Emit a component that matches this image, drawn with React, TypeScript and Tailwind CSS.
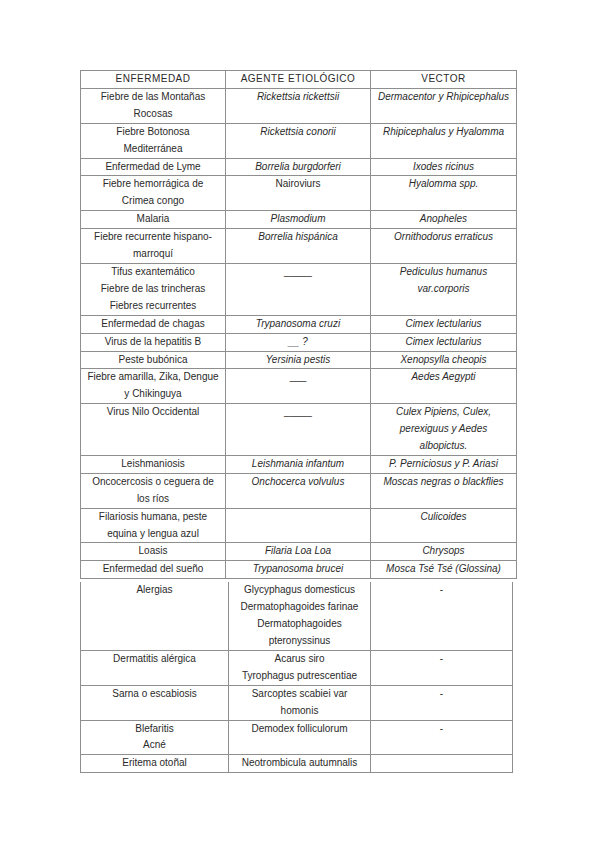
import React from "react";

type Cell = { lines: string[]; italic?: boolean };
type Row = [Cell, Cell, Cell];

const c = (s: string, italic = false): Cell => ({ lines: s === "" ? [] : s.split("|"), italic });

const upper: Row[] = [
  [c("Fiebre de las Montañas|Rocosas"), c("Rickettsia rickettsii", true), c("Dermacentor y Rhipicephalus", true)],
  [c("Fiebre Botonosa|Mediterránea"), c("Rickettsia conorii", true), c("Rhipicephalus y Hyalomma", true)],
  [c("Enfermedad de Lyme"), c("Borrelia burgdorferi", true), c("Ixodes ricinus", true)],
  [c("Fiebre hemorrágica de|Crimea congo"), c("Nairoviurs"), c("Hyalomma spp.", true)],
  [c("Malaria"), c("Plasmodium", true), c("Anopheles", true)],
  [c("Fiebre recurrente hispano-|marroquí"), c("Borrelia hispánica", true), c("Ornithodorus erraticus", true)],
  [c("Tifus exantemático|Fiebre de las trincheras|Fiebres recurrentes"), c("_____"), c("Pediculus humanus|var.corporis", true)],
  [c("Enfermedad de chagas"), c("Trypanosoma cruzi", true), c("Cimex lectularius", true)],
  [c("Virus de la hepatitis B"), c("__ ?", true), c("Cimex lectularius", true)],
  [c("Peste bubónica"), c("Yersinia pestis", true), c("Xenopsylla cheopis", true)],
  [c("Fiebre amarilla, Zika, Dengue|y Chikinguya"), c("___"), c("Aedes Aegypti", true)],
  [c("Virus Nilo Occidental"), c("_____"), c("Culex Pipiens, Culex,|perexiguus y Aedes|albopictus.", true)],
  [c("Leishmaniosis"), c("Leishmania infantum", true), c("P. Perniciosus y P. Ariasi", true)],
  [c("Oncocercosis o ceguera de|los ríos"), c("Onchocerca volvulus", true), c("Moscas negras o blackflies", true)],
  [c("Filariosis humana, peste|equina y lengua azul"), c(""), c("Culicoides", true)],
  [c("Loasis"), c("Filaria Loa Loa", true), c("Chrysops", true)],
  [c("Enfermedad del sueño"), c("Trypanosoma brucei", true), c("Mosca Tsé Tsé (Glossina)", true)],
];

const lower: Row[] = [
  [c("Alergias"), c("Glycyphagus domesticus|Dermatophagoides farinae|Dermatophagoides|pteronyssinus"), c("-")],
  [c("Dermatitis alérgica"), c("Acarus siro|Tyrophagus putrescentiae"), c("-")],
  [c("Sarna o escabiosis"), c("Sarcoptes scabiei var|homonis"), c("-")],
  [c("Blefaritis|Acné"), c("Demodex folliculorum"), c("-")],
  [c("Eritema otoñal"), c("Neotrombicula autumnalis"), c("")],
];

const td =
  "border border-[#8e8e8e] align-top text-center px-1 py-0 leading-[16.9px] whitespace-nowrap overflow-hidden";

function CellView({ cell }: { cell: Cell }) {
  return (
    <td className={td + (cell.italic ? " italic" : "")}>
      {cell.lines.map((l, i) => (
        <div key={i}>{l}</div>
      ))}
      {cell.lines.length === 0 ? <div>&nbsp;</div> : null}
    </td>
  );
}

export default function App() {
  return (
    <div
      className="w-[599px] h-[848px] bg-white pt-[70px] pl-[80px] text-[10px] text-[#2a2a2a]"
      style={{ fontFamily: '"Liberation Sans", Arial, sans-serif' }}
    >
      <table className="border-collapse table-fixed w-[436px]">
        <colgroup>
          <col className="w-[145px]" />
          <col className="w-[145px]" />
          <col className="w-[146px]" />
        </colgroup>
        <tbody>
          <tr>
            <td className={td + " tracking-[0.5px]"}>ENFERMEDAD</td>
            <td className={td + " tracking-[0.5px]"}>AGENTE ETIOLÓGICO</td>
            <td className={td + " tracking-[0.5px]"}>VECTOR</td>
          </tr>
          {upper.map((r, i) => (
            <tr key={i}>
              {r.map((cell, j) => (
                <CellView key={j} cell={cell} />
              ))}
            </tr>
          ))}
        </tbody>
      </table>
      <table className="border-collapse table-fixed w-[432px] mt-[3px]">
        <colgroup>
          <col className="w-[148px]" />
          <col className="w-[142px]" />
          <col className="w-[142px]" />
        </colgroup>
        <tbody>
          {lower.map((r, i) => (
            <tr key={i} className={i === 0 ? "[&>td]:border-t-0" : ""}>
              {r.map((cell, j) => (
                <CellView key={j} cell={cell} />
              ))}
            </tr>
          ))}
        </tbody>
      </table>
    </div>
  );
}
